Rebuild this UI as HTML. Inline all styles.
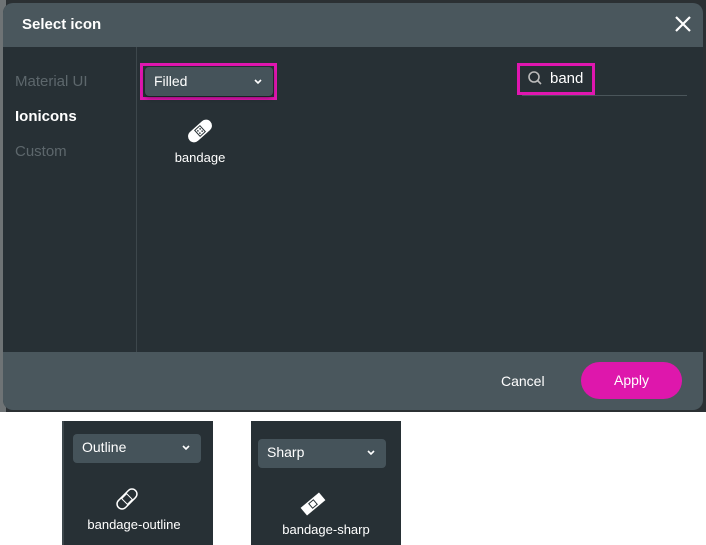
<!DOCTYPE html>
<html><head><meta charset="utf-8"><style>
*{margin:0;padding:0;box-sizing:border-box}
body{width:706px;height:545px;background:#fff;position:relative;overflow:hidden;font-family:"Liberation Sans",sans-serif;color:#fff}
.bg{position:absolute;left:0;top:0;width:706px;height:412px;background:#2b3033}
.bgl{position:absolute;left:0;top:0;width:6px;height:412px;background:#6e7375}
.dlg{position:absolute;left:3px;top:3px;width:700px;height:407px;border-radius:10px;overflow:hidden;background:#273035}
.hd{position:absolute;left:0;top:0;width:700px;height:44px;background:#4a575d}
.hd .t{position:absolute;left:19px;top:13px;font-size:15px;font-weight:bold}
.x{position:absolute;left:671px;top:12px}
.side{position:absolute;left:0;top:44px;width:134px;height:305px;border-right:1px solid #3d474c}
.side div{position:absolute;left:12px;font-size:15px;color:#5d676c}
.ft{position:absolute;left:0;top:349px;width:700px;height:58px;background:#4a575d}
.sel{position:absolute;background:#45535a;border-radius:4px;font-size:14px}
.sel span{position:absolute;left:9px;top:5px}
.chev{position:absolute;right:10px;top:10px}
.pink{position:absolute;border:3px solid #e016b0}
.lbl{position:absolute;font-size:13px;text-align:center}
.panel{position:absolute;background:#273035}
</style></head><body>
<div class="bg"></div><div class="bgl"></div>
<div class="dlg">
 <div class="hd"><div class="t">Select icon</div>
  <svg class="x" width="18" height="18" viewBox="0 0 18 18"><path d="M2 2L16 16M16 2L2 16" stroke="#fff" stroke-width="2.2"/></svg></div>
 <div class="side">
  <div style="top:26px">Material UI</div>
  <div style="top:61px;color:#fff;font-weight:bold">Ionicons</div>
  <div style="top:96px">Custom</div>
 </div>
 <div class="ft">
  <div style="position:absolute;left:498px;top:21px;font-size:14px">Cancel</div>
  <div style="position:absolute;left:578px;top:10px;width:101px;height:37px;border-radius:19px;background:#de17ac;font-size:14px;text-align:center;line-height:37px">Apply</div>
 </div>
</div>
<div class="pink" style="left:140px;top:63px;width:137px;height:37px"></div>
<div class="sel" style="left:145px;top:67px;width:128px;height:29px;box-shadow:0 2px 4px rgba(0,0,0,.4)"><span style="top:6px">Filled</span>
<svg class="chev" width="10" height="8" viewBox="0 0 10 8" style="top:11px"><path d="M2 2L5 5L8 2" stroke="#fff" stroke-width="1.6" fill="none"/></svg></div>
<div style="position:absolute;left:522px;top:95px;width:165px;height:1px;background:#4a555a"></div>
<div class="pink" style="left:517px;top:63px;width:78px;height:32px"></div>
<svg style="position:absolute;left:527px;top:70px" width="16" height="16" viewBox="0 0 16 16"><circle cx="7" cy="7" r="5" stroke="#bbb" stroke-width="1.6" fill="none"/><path d="M10.5 10.5L14 14" stroke="#bbb" stroke-width="1.6"/></svg>
<div style="position:absolute;left:550px;top:70px;font-size:15px">band</div>

<svg style="position:absolute;left:186px;top:118px" width="28" height="26" viewBox="0 0 28 26"><g transform="rotate(-42 14 13)"><rect x="0" y="7" width="28" height="12" rx="6" fill="#fff"/><rect x="10" y="8.5" width="8" height="9" fill="#273035"/><rect x="11" y="9.5" width="6" height="7" fill="#fff"/><circle cx="12.5" cy="11.5" r=".8" fill="#273035"/><circle cx="15.5" cy="11.5" r=".8" fill="#273035"/><circle cx="12.5" cy="14.5" r=".8" fill="#273035"/><circle cx="15.5" cy="14.5" r=".8" fill="#273035"/></g></svg>
<div class="lbl" style="left:160px;top:150px;width:80px">bandage</div>

<div class="panel" style="left:62px;top:421px;width:151px;height:124px;border-left:2px solid #3d474c"></div>
<div class="sel" style="left:73px;top:434px;width:128px;height:29px"><span>Outline</span>
<svg class="chev" width="10" height="8" viewBox="0 0 10 8"><path d="M2 2L5 5L8 2" stroke="#fff" stroke-width="1.6" fill="none"/></svg></div>
<svg style="position:absolute;left:114px;top:487px" width="26" height="24" viewBox="0 0 26 24"><g transform="rotate(-45 13 12)"><rect x="1" y="7" width="24" height="10" rx="5" fill="none" stroke="#fff" stroke-width="1.5"/><rect x="9.5" y="8" width="7" height="8" fill="none" stroke="#fff" stroke-width="1"/></g></svg>
<div class="lbl" style="left:62px;top:517px;width:144px">bandage-outline</div>

<div class="panel" style="left:251px;top:421px;width:150px;height:124px"></div>
<div class="sel" style="left:258px;top:439px;width:128px;height:29px"><span>Sharp</span>
<svg class="chev" width="10" height="8" viewBox="0 0 10 8"><path d="M2 2L5 5L8 2" stroke="#fff" stroke-width="1.6" fill="none"/></svg></div>
<svg style="position:absolute;left:300px;top:492px" width="26" height="24" viewBox="0 0 26 24"><g transform="rotate(-40 13 12)"><rect x="1" y="7" width="24" height="10" fill="#fff"/><rect x="9.5" y="8.5" width="7" height="7" fill="#273035"/><rect x="10.5" y="9.5" width="5" height="5" fill="#fff"/></g></svg>
<div class="lbl" style="left:251px;top:522px;width:150px">bandage-sharp</div>
</body></html>
